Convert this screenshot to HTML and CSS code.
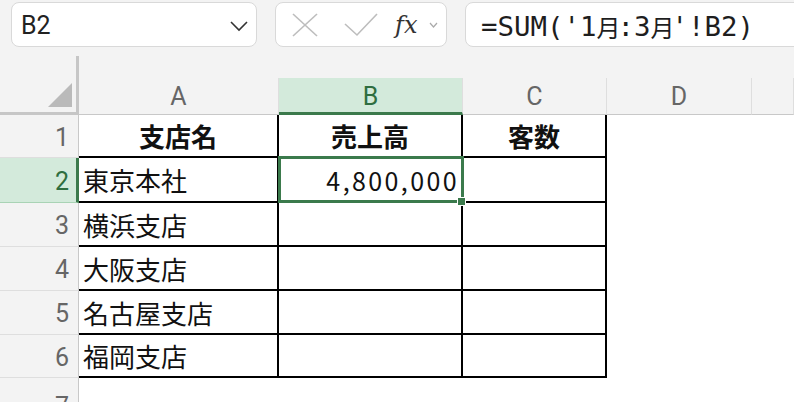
FILE: index.html
```html
<!DOCTYPE html>
<html lang="ja">
<head>
    <meta charset="UTF-8">
    <meta name="viewport" content="width=device-width, initial-scale=1.0">
    <title>売上集計</title>
    <link rel="stylesheet" href="styles.css">
</head>
<body>

    <!-- 名前ボックスと数式バー -->
    <div class="toolbar">
        <div class="namebox">
            <span class="cellref">B2</span>
            <svg class="chevron" width="18" height="12" viewBox="0 0 18 12">
                <polyline points="1,2 9,10 17,2" fill="none" stroke="#333" stroke-width="1.6"/>
            </svg>
        </div>
        <div class="fxbox">
            <svg width="26" height="24" viewBox="0 0 26 24">
                <line x1="1" y1="1" x2="25" y2="23" stroke="#bdbdbd" stroke-width="1.6"/>
                <line x1="25" y1="1" x2="1" y2="23" stroke="#bdbdbd" stroke-width="1.6"/>
            </svg>
            <svg class="check" width="34" height="24" viewBox="0 0 34 24">
                <polyline points="1,11 13,22 33,1" fill="none" stroke="#bdbdbd" stroke-width="1.6"/>
            </svg>
            <span class="fx"><i>fx</i></span>
            <svg width="9" height="6" viewBox="0 0 9 6">
                <polyline points="1,1 4.5,5 8,1" fill="none" stroke="#aaa" stroke-width="1.2"/>
            </svg>
        </div>
        <div class="formula">=SUM('1<span class="kanji">月</span>:3<span class="kanji">月</span>'!B2)</div>
    </div>

    <!-- シート -->
    <div class="sheet">
        <div class="corner"><span class="corner-tri"></span></div>
        <div class="colhead">A</div>
        <div class="colhead active">B</div>
        <div class="colhead">C</div>
        <div class="colhead">D</div>
        <div class="colhead"></div>

        <div class="rowhead">1</div>
        <div class="cell t head">支店名</div>
        <div class="cell t head">売上高</div>
        <div class="cell t head">客数</div>
        <div class="cell"></div>
        <div class="cell"></div>

        <div class="rowhead active">2</div>
        <div class="cell t">東京本社</div>
        <div class="cell t num selected">4,800,000<span class="sel"></span><span class="handle"></span></div>
        <div class="cell t"></div>
        <div class="cell"></div>
        <div class="cell"></div>

        <div class="rowhead">3</div>
        <div class="cell t">横浜支店</div>
        <div class="cell t"></div>
        <div class="cell t"></div>
        <div class="cell"></div>
        <div class="cell"></div>

        <div class="rowhead">4</div>
        <div class="cell t">大阪支店</div>
        <div class="cell t"></div>
        <div class="cell t"></div>
        <div class="cell"></div>
        <div class="cell"></div>

        <div class="rowhead">5</div>
        <div class="cell t">名古屋支店</div>
        <div class="cell t"></div>
        <div class="cell t"></div>
        <div class="cell"></div>
        <div class="cell"></div>

        <div class="rowhead">6</div>
        <div class="cell t">福岡支店</div>
        <div class="cell t"></div>
        <div class="cell t"></div>
        <div class="cell"></div>
        <div class="cell"></div>

        <div class="rowhead last">7</div>
        <div class="cell"></div>
        <div class="cell"></div>
        <div class="cell"></div>
        <div class="cell"></div>
        <div class="cell"></div>
    </div>

</body>
</html>
```

FILE: styles.css
```css
/* ページ全体 */
body {
    margin: 0;
    background-color: #f3f3f3;
    font-family: Roboto, "Noto Sans CJK JP", sans-serif;
    overflow: hidden;
    height: 402px;
}

/* 名前ボックスと数式バー */
.toolbar {
    display: flex;
    gap: 18px;
    padding: 2px 0 0 11px;
    height: 45px;
}

.namebox, .fxbox, .formula {
    box-sizing: border-box;
    flex-shrink: 0;
    height: 45px;
    background-color: #fff;
    border: 1px solid #d9d9d9;
    border-radius: 8px;
    display: flex;
    align-items: center;
}

.namebox {
    width: 246px;
    padding: 2px 8px 0 9px;
    justify-content: space-between;
}

.cellref {
    font-size: 25px;
    color: #222;
}

.fxbox {
    width: 172px;
    padding: 0 0 0 16px;
}

.check {
    margin-left: 26px;
}

.fx {
    margin-left: 17px;
    margin-right: 12px;
    font-family: "DejaVu Serif", serif;
    font-size: 24px;
    color: #333;
}

.formula {
    width: 360px;
    padding: 4px 0 0 15px;
    font-family: "DejaVu Sans Mono", "Noto Sans CJK JP", monospace;
    font-size: 27.4px;
    color: #1e1e1e;
    white-space: pre;
}

.kanji {
    font-size: 24px;
    letter-spacing: -3px;
}

/* シート */
.sheet {
    margin-top: 9px;
    display: grid;
    grid-template-columns: 79px 200px 184px 144px 145px 1fr;
    grid-template-rows: 59px 43px 45px 44px 44px 44px 43px 44px;
}

.corner {
    box-sizing: border-box;
    border-right: 3px solid #c6c6c6;
    border-bottom: 3px solid #c6c6c6;
    display: flex;
    justify-content: flex-end;
    align-items: flex-end;
    padding: 0 4px 5px 0;
}

.corner-tri {
    width: 24px;
    height: 24px;
    background-color: #bababa;
    clip-path: polygon(100% 0, 100% 100%, 0 100%);
}

.colhead {
    align-self: end;
    box-sizing: border-box;
    height: 37px;
    border-right: 1px solid #dedede;
    border-bottom: 1px solid #c8c8c8;
    display: flex;
    align-items: center;
    justify-content: center;
    font-size: 25px;
    color: #666;
}

.colhead.active {
    background-color: #d3eadb;
    border-bottom: 3px solid #3b7a4c;
    color: #2f6e40;
    padding-top: 2px;
}

.rowhead {
    box-sizing: border-box;
    border-right: 1px solid #c8c8c8;
    border-bottom: 1px solid #dedede;
    display: flex;
    align-items: center;
    justify-content: flex-end;
    padding: 2px 9px 0 0;
    font-size: 25px;
    color: #666;
}

.rowhead.active {
    background-color: #d3eadb;
    border-right: 3px solid #3b7a4c;
    border-bottom-color: #a9d3b5;
    color: #2f6e40;
    padding-right: 7px;
}

.rowhead.last {
    align-items: flex-start;
    padding-top: 14px;
}

/* セル */
.cell {
    box-sizing: border-box;
    background-color: #fff;
    display: flex;
    align-items: center;
    padding: 0 0 0 4px;
    font-family: "Noto Sans CJK JP", sans-serif;
    font-size: 26px;
    color: #111;
}

.cell.t {
    border-right: 2px solid #000;
    border-bottom: 2px solid #000;
}

.cell.head {
    justify-content: center;
    font-weight: bold;
    padding: 0;
}

.cell.num {
    justify-content: flex-end;
    padding-right: 2px;
    font-size: 25px;
    letter-spacing: 2.4px;
}

.selected {
    position: relative;
}

.sel {
    position: absolute;
    top: -2px;
    left: -1px;
    right: -3px;
    bottom: -2px;
    border: 3px solid #3b7a4c;
}

.handle {
    position: absolute;
    right: -5px;
    bottom: -5px;
    box-sizing: border-box;
    width: 9px;
    height: 9px;
    background-color: #3b7a4c;
    border: 1px solid #fff;
}
```
